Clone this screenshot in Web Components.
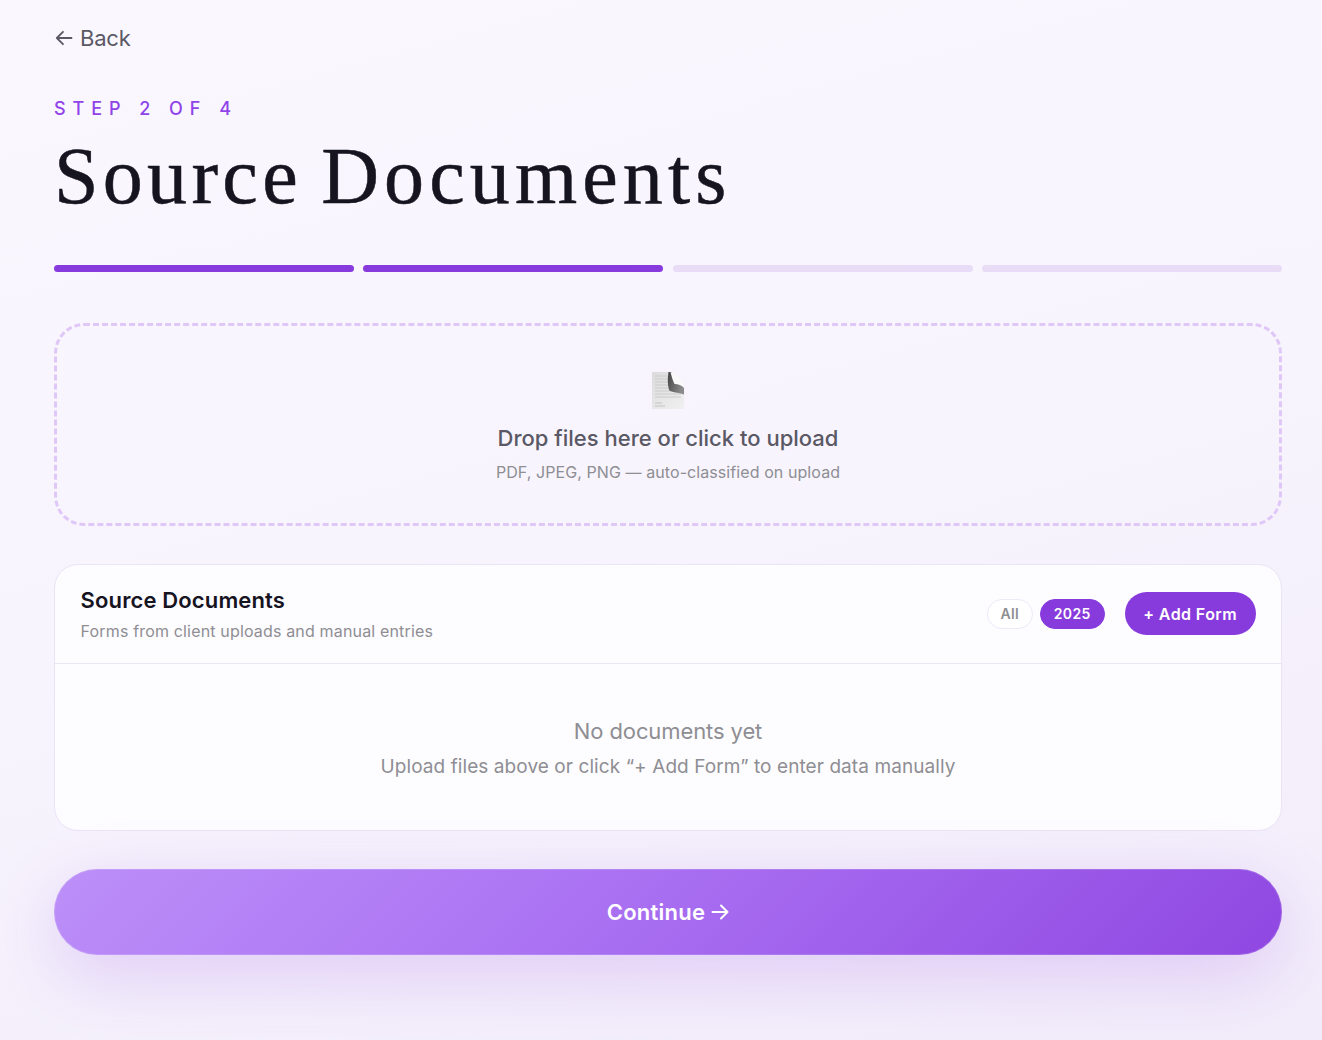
<!DOCTYPE html>
<html><head><meta charset="utf-8">
<style>
html,body{margin:0;padding:0;height:100%}
body{font-family:Inter,"Noto Sans",sans-serif;background:linear-gradient(165deg,#faf7ff 0%,#f7f4fd 50%,#f2ecfa 100%);overflow:hidden}
</style></head><body>
<wizard-page>
  <back-link>Back</back-link>
  <step-header step="STEP 2 OF 4" title="Source Documents"></step-header>
  <step-progress total="4" done="2"></step-progress>
  <drop-zone></drop-zone>
  <docs-card></docs-card>
  <continue-button>Continue</continue-button>
</wizard-page>
<script>
function def(name,html,init){customElements.define(name,class extends HTMLElement{constructor(){super();const r=this.attachShadow({mode:'open'});r.innerHTML=html;}connectedCallback(){if(init)init(this);}});}
def('wizard-page',`<style>:host{display:flex;flex-direction:column;padding:0 40px 0 54px;box-sizing:border-box;width:1322px;height:1040px}</style><slot></slot>`);
def('back-link',`<style>:host{display:flex;align-items:center;gap:6px;height:24px;margin-top:26px;font-size:22px;letter-spacing:-.2px;color:#5a5864;line-height:24px}
svg{width:20px;height:20px;display:block;flex:none}</style>
<svg viewBox="0 0 20 20" fill="none" stroke="#5a5864" stroke-width="1.8" stroke-linecap="round" stroke-linejoin="round"><path d="M17.5 10H2.8M9 3.8 2.8 10 9 16.2"/></svg><slot></slot>`);
def('step-header',`<style>:host{display:block}
.s{margin-top:48px;font-size:18px;line-height:22px;font-weight:500;letter-spacing:6.95px;color:#8f43e8;white-space:pre}
h1{margin:14px 0 0;font:400 80px/84px "Liberation Serif",serif;letter-spacing:4.3px;word-spacing:-5px;-webkit-text-stroke:.5px #16141f;color:#16141f;white-space:nowrap}
span{letter-spacing:5.1px}</style>
<div class="s" id="s"></div><h1 id="t"></h1>`,el=>{const r=el.shadowRoot;r.getElementById('s').textContent=el.getAttribute('step');const p=el.getAttribute('title').split(' ');const h=r.getElementById('t');h.textContent=p[0]+' ';const sp=document.createElement('span');sp.textContent=p[1];h.append(sp);el.removeAttribute('title');});
def('step-progress',`<style>:host{display:grid;grid-template-columns:repeat(4,1fr);gap:9.5px;margin-top:47px}
i{display:block;height:7px;border-radius:4px;background:#e8dcf6}i.d{background:#883bdd}</style>
<i class="d"></i><i class="d"></i><i></i><i></i>`);
def('drop-zone',`<style>:host{display:flex;flex-direction:column;align-items:center;box-sizing:border-box;height:203px;margin-top:51px;border:3px dashed #dfc8f8;border-radius:30px;padding-top:45px}
svg{width:34px;height:40px;display:block}
.a{margin-top:13px;font-size:22px;line-height:28px;font-weight:500;letter-spacing:.01px;color:#5a5864}
.b{margin-top:10px;font-size:16px;line-height:20px;letter-spacing:.08px;color:#8e8e93}</style>
<svg viewBox="0 0 34 40"><defs><linearGradient id="g" x1="0" y1="0" x2="1" y2="1"><stop offset="0" stop-color="#dcdcdc"/><stop offset="1" stop-color="#f0f0f0"/></linearGradient><linearGradient id="f" x1="0" y1="0" x2="1" y2=".4"><stop offset="0" stop-color="#444"/><stop offset="1" stop-color="#8a8a8a"/></linearGradient><filter id="b" x="-10%" y="-10%" width="120%" height="120%"><feGaussianBlur stdDeviation=".5"/></filter></defs>
<g filter="url(#b)"><path d="M1 1H19L33 15V38H1z" fill="url(#g)"/>
<path d="M4 5h12M4 8h13M4 11h14M4 14h15M4 17h16M4 20h26M4 23h26M4 26h26" stroke="#cbcbcb" stroke-width="1.1"/><path d="M4 32h7M4 35h10" stroke="#c4c4c4" stroke-width="1"/>
<path d="M17.500 1C16.500 7 16.500 13 18 19C21 22 27 21 33 23.500V15L20 1z" fill="url(#f)"/>
<path d="M19.500 1C20.500 5 21.500 9 23.500 13C27 13 31 14.500 33 17V14C30 8 25 3 19.500 1z" fill="#f9f9f9"/></g></svg>
<div class="a">Drop files here or click to upload</div><div class="b">PDF, JPEG, PNG — auto-classified on upload</div>`);
def('filter-pill',`<style>:host{display:block;box-sizing:border-box;height:30px;line-height:28px;padding:0 12.500px;border-radius:15px;border:1px solid #efe8f8;font-size:14px;font-weight:600;letter-spacing:.4px;color:#8e8e93;background:#fff}
:host([on]){background:#883bdd;border-color:#883bdd;color:#fff;letter-spacing:.4px;padding:0 13px}</style><slot></slot>`);
def('docs-card',`<style>:host{display:block;box-sizing:border-box;height:267px;margin-top:38px;background:#fdfcff;border:1px solid #ebe3f6;border-radius:24px}
header{display:flex;align-items:center;height:99px;box-sizing:border-box;padding:0 25px;border-bottom:1px solid #ebe6f3}
.h{flex:1;padding-left:.6px}.t{font-size:22px;line-height:28px;font-weight:600;letter-spacing:.13px;color:#16141f;margin-top:-2px}
.u{margin-top:7px;font-size:16px;line-height:20px;letter-spacing:.16px;color:#8e8e93}
.p{display:flex;gap:7px;margin-right:20px}
button{all:unset;box-sizing:border-box;height:43px;margin-top:-1px;padding:0 19px 0 18.500px;border-radius:22px;background:#883bdd;color:#fff;font-size:16px;font-weight:600;letter-spacing:.4px}
.e{text-align:center;padding-top:53px}
.e1{font-size:22px;line-height:28px;letter-spacing:-.1px;color:#8e8e93}.e2{margin-top:8px;font-size:19px;line-height:28px;letter-spacing:.08px;color:#8e8e93}</style>
<header><div class="h"><div class="t">Source Documents</div><div class="u">Forms from client uploads and manual entries</div></div>
<div class="p"><filter-pill>All</filter-pill><filter-pill on>2025</filter-pill></div><button>+ Add Form</button></header>
<div class="e"><div class="e1">No documents yet</div><div class="e2">Upload files above or click “+ Add Form” to enter data manually</div></div>`);
def('continue-button',`<style>:host{display:flex;align-items:center;justify-content:center;gap:6px;height:86px;margin-top:38px;border-radius:43px;background:linear-gradient(135deg,#bc8ff8 0%,#ab73f3 42%,#8f47e1 100%);color:#fff;font-size:22px;font-weight:600;letter-spacing:.25px;box-shadow:0 20px 70px rgba(138,59,224,.2),inset 0 0 0 1px rgba(255,255,255,.14)}
svg{width:18px;height:18px;display:block}</style><slot></slot>
<svg viewBox="0 0 18 18" fill="none" stroke="#fff" stroke-width="2" stroke-linecap="round" stroke-linejoin="round"><path d="M1.500 9h15M10 2.500 16.500 9 10 15.500"/></svg>`);
</script></body></html>
